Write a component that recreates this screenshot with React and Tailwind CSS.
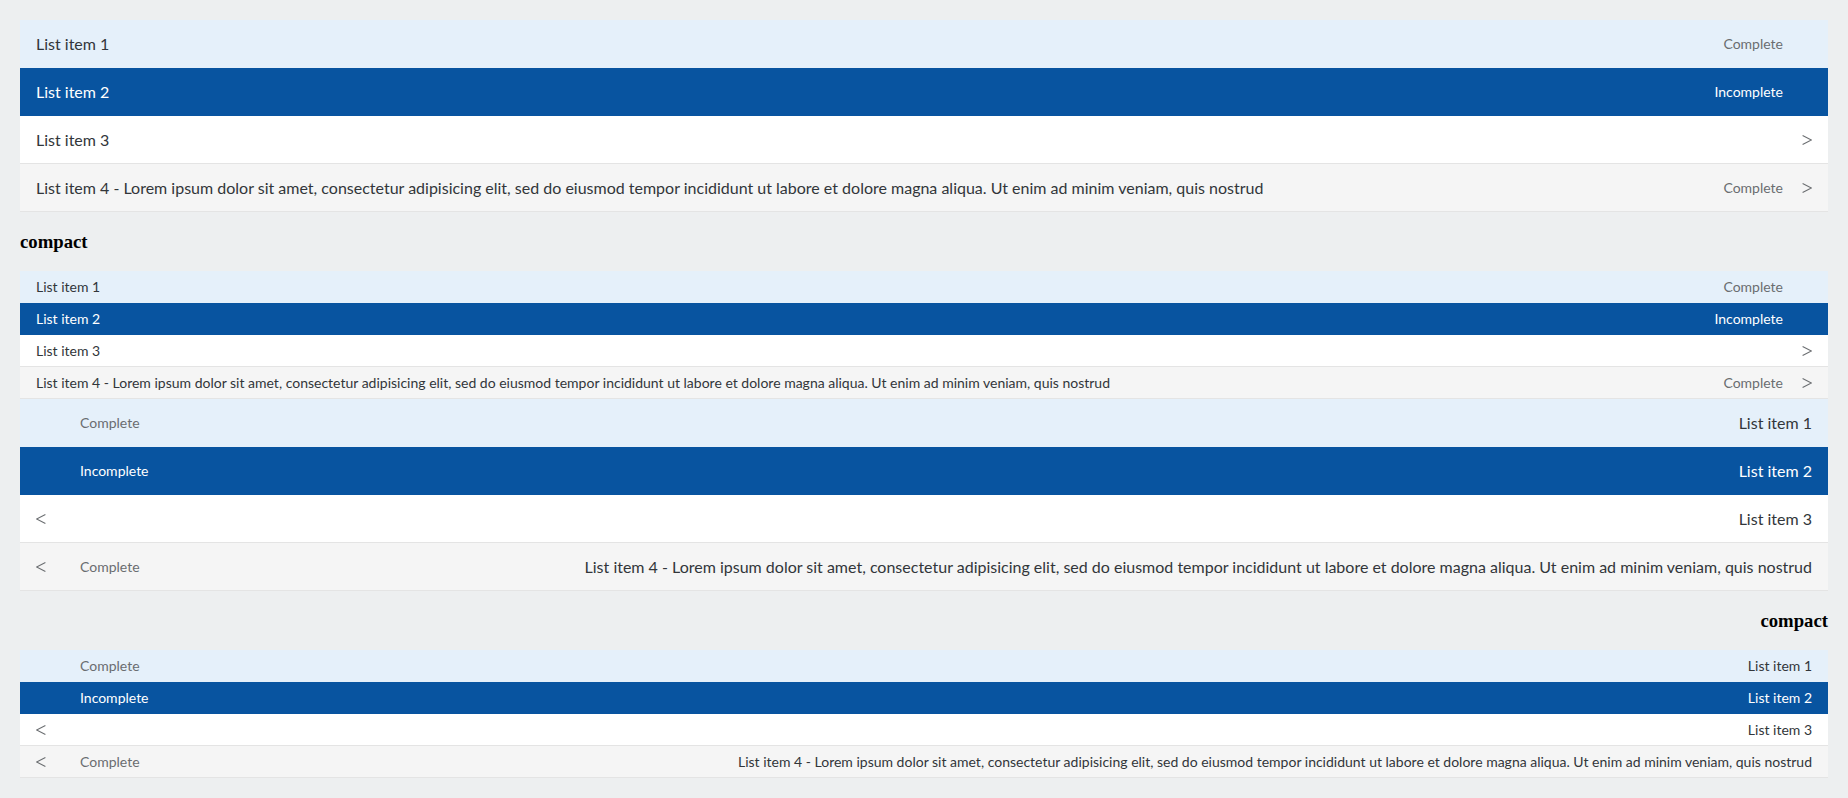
import React from 'react';

const LONG =
  'List item 4 - Lorem ipsum dolor sit amet, consectetur adipisicing elit, sed do eiusmod tempor incididunt ut labore et dolore magna aliqua. Ut enim ad minim veniam, quis nostrud';

const items = [
  { text: 'List item 1', status: 'Complete', type: 'selected' },
  { text: 'List item 2', status: 'Incomplete', type: 'active' },
  { text: 'List item 3', status: '', type: 'plain', arrow: true },
  { text: LONG, status: 'Complete', type: 'hover', arrow: true },
];

function Arrow({ rtl }) {
  return (
    <svg width="10" height="10" viewBox="0 0 10 10" className={rtl ? '-scale-x-100' : ''}>
      <polyline points="0.6,0.6 9.4,5 0.6,9.4" fill="none" stroke="#6a6d70" strokeWidth="1.1" />
    </svg>
  );
}

function Row({ item, compact, rtl }) {
  const bg =
    item.type === 'selected'
      ? 'bg-[#e5f0fa] border-[#e5f0fa]'
      : item.type === 'active'
      ? 'bg-[#0854a0] border-[#0854a0]'
      : item.type === 'hover'
      ? 'bg-[#f5f5f5] border-[#e4e4e4]'
      : 'bg-white border-[#e4e4e4]';
  const active = item.type === 'active';
  return (
    <li
      className={`flex items-center border-b px-4 ${bg} ${compact ? 'h-8' : 'h-12'}`}
    >
      <span
        className={`flex-1 whitespace-nowrap ${compact ? 'text-sm' : 'text-base'} ${
          active ? 'text-white' : 'text-[#32363a]'
        }`}
      >
        {item.text}
      </span>
      {item.status && (
        <span className={`text-sm whitespace-nowrap ${active ? 'text-white' : 'text-[#6a6d70]'}`}>
          {item.status}
        </span>
      )}
      <span className={`flex justify-end ${rtl ? 'w-[44px]' : 'w-[29px]'}`}>
        {item.arrow && <Arrow rtl={rtl} />}
      </span>
    </li>
  );
}

function List({ compact, rtl }) {
  return (
    <ul className="flex flex-col">
      {items.map((it) => (
        <Row key={it.text} item={it} compact={compact} rtl={rtl} />
      ))}
    </ul>
  );
}

function Heading() {
  return (
    <h3 className="my-[19px] h-[21px] text-[18.72px] leading-[21px] font-bold text-black [font-family:'Liberation_Serif',serif]">
      compact
    </h3>
  );
}

export default function App() {
  return (
    <div className="min-h-[798px] bg-[#edeff0] px-5 pt-5 pb-5 [font-family:Lato,sans-serif]">
      <List />
      <Heading />
      <List compact />
      <div dir="rtl">
        <List rtl />
        <Heading />
        <List compact rtl />
      </div>
    </div>
  );
}
